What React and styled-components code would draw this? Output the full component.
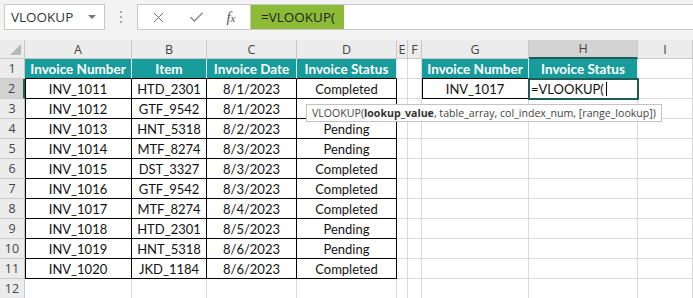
import React from 'react'
import styled, { createGlobalStyle, css } from 'styled-components'
import { X, Check } from 'lucide-react'

const GlobalStyle = createGlobalStyle`
  html, body { margin: 0; padding: 0; background: #fff; }
  * { box-sizing: border-box; }
`

const TEAL = '#189b9b'
const SEL = '#1d5e58'

const columns = [
  { id: 'A', w: '107px' },
  { id: 'B', w: '75px' },
  { id: 'C', w: '90px' },
  { id: 'D', w: '100px' },
  { id: 'E', w: '11px' },
  { id: 'F', w: '14px' },
  { id: 'G', w: '107px' },
  { id: 'H', w: '109px' },
  { id: 'I', w: '1fr' },
]

const invoices = [
  ['INV_1011', 'HTD_2301', '8/1/2023', 'Completed'],
  ['INV_1012', 'GTF_9542', '8/1/2023', 'Completed'],
  ['INV_1013', 'HNT_5318', '8/2/2023', 'Pending'],
  ['INV_1014', 'MTF_8274', '8/3/2023', 'Pending'],
  ['INV_1015', 'DST_3327', '8/3/2023', 'Completed'],
  ['INV_1016', 'GTF_9542', '8/3/2023', 'Completed'],
  ['INV_1017', 'MTF_8274', '8/4/2023', 'Completed'],
  ['INV_1018', 'HTD_2301', '8/5/2023', 'Pending'],
  ['INV_1019', 'HNT_5318', '8/6/2023', 'Pending'],
  ['INV_1020', 'JKD_1184', '8/6/2023', 'Completed'],
]

const Window = styled.div`
  width: 693px;
  height: 298px;
  overflow: hidden;
  background: #f3f3f3;
  display: flex;
  flex-direction: column;
  font-family: 'Open Sans', 'Noto Sans', sans-serif;
`

const FormulaBar = styled.div`
  height: 40px;
  display: flex;
  align-items: flex-start;
  padding: 4px 0 0 4px;
  flex-shrink: 0;
`

const NameBox = styled.div`
  width: 101px;
  height: 26px;
  background: #fff;
  border: 1px solid #c8c8c8;
  display: flex;
  align-items: center;
  justify-content: space-between;
  padding: 0 8px 0 6px;
  font-size: 13.5px;
  color: #333;
`

const Caret = styled.span`
  width: 0;
  height: 0;
  border-left: 4px solid transparent;
  border-right: 4px solid transparent;
  border-top: 4px solid #777;
`

const Grip = styled.div`
  width: 32px;
  height: 26px;
  display: flex;
  flex-direction: column;
  align-items: center;
  justify-content: center;
  gap: 3px;
  span {
    width: 2px;
    height: 2px;
    background: #a8a8a8;
  }
`

const ButtonGroup = styled.div`
  width: 113px;
  height: 26px;
  background: #fff;
  border: 1px solid #c8c8c8;
  border-right: none;
  display: flex;
  align-items: center;
  justify-content: space-around;
  padding: 0 4px 0 2px;
  color: #707070;
`

const Fx = styled.span`
  font-family: 'Liberation Serif', serif;
  font-style: italic;
  font-size: 15px;
  color: #555;
  sub {
    font-size: 11px;
    vertical-align: baseline;
  }
`

const FormulaInput = styled.div`
  flex: 1;
  height: 26px;
  background: #fff;
  border: 1px solid #c8c8c8;
  border-right: none;
  display: flex;
  align-items: stretch;
`

const FormulaText = styled.span`
  width: 93px;
  background: #8dbb36;
  display: flex;
  align-items: center;
  padding-left: 10px;
  font-size: 13.5px;
  color: #1e1e1e;
`

const SheetWrap = styled.div`
  position: relative;
  flex: 1;
`

const Grid = styled.div`
  display: grid;
  grid-template-columns: 25px ${columns.map((c) => c.w).join(' ')};
  grid-template-rows: 19px repeat(12, 20px);
  background: #fff;
  font-family: 'Lato', 'Open Sans', sans-serif;
`

const Corner = styled.div`
  position: relative;
  background: #ececec;
  border-right: 1px solid #c9c9c9;
  border-bottom: 1px solid #c9c9c9;
  &::after {
    content: '';
    position: absolute;
    right: 3px;
    bottom: 3px;
    width: 0;
    height: 0;
    border-left: 11px solid transparent;
    border-bottom: 11px solid #b9b9b9;
  }
`

const ColHeader = styled.div`
  background: ${(p) => (p.$active ? '#d3d3d3' : '#ececec')};
  border-right: 1px solid #c9c9c9;
  border-bottom: ${(p) => (p.$active ? `2px solid ${SEL}` : '1px solid #c9c9c9')};
  display: flex;
  align-items: center;
  justify-content: center;
  font-family: 'Open Sans', sans-serif;
  font-size: 12.5px;
  color: #444;
`

const RowHeader = styled.div`
  background: ${(p) => (p.$active ? '#d3d3d3' : '#ececec')};
  border-right: ${(p) => (p.$active ? `2px solid ${SEL}` : '1px solid #c9c9c9')};
  border-bottom: 1px solid #c9c9c9;
  display: flex;
  align-items: center;
  justify-content: center;
  font-family: 'Open Sans', sans-serif;
  font-size: 12.5px;
  color: #444;
`

const Cell = styled.div`
  position: relative;
  border-right: 1px solid #dadada;
  border-bottom: 1px solid #dadada;
  display: flex;
  align-items: center;
  justify-content: center;
  font-size: 13px;
  color: #111;
  white-space: nowrap;
  overflow: visible;

  ${(p) =>
    p.$head &&
    css`
      background: ${TEAL};
      color: #fff;
      font-weight: 700;
      font-size: 13.5px;
      border-right-color: #d8eeee;
      border-bottom-color: #000;
    `}

  ${(p) =>
    p.$boxed &&
    css`
      border-right-color: #000;
      border-bottom-color: #000;
    `}

  ${(p) =>
    p.$edge &&
    css`
      box-shadow: inset 1px 0 0 #000;
    `}

  ${(p) =>
    p.$active &&
    css`
      justify-content: flex-start;
      padding-left: 2px;
      outline: 2px solid ${SEL};
      outline-offset: -1px;
      z-index: 1;
    `}
`

const Cursor = styled.span`
  display: inline-block;
  width: 1px;
  height: 14px;
  background: #000;
  margin-left: 2px;
`

const Tooltip = styled.div`
  position: absolute;
  left: 306px;
  top: 64px;
  height: 18px;
  padding: 0 5px;
  background: #fff;
  border: 1px solid #c3c3c3;
  display: flex;
  align-items: center;
  font-family: 'Open Sans', sans-serif;
  font-size: 10.6px;
  color: #444;
  white-space: nowrap;
  z-index: 2;
  b {
    font-weight: 700;
    color: #333;
  }
`

function cellFor(r, col) {
  const i = columns.findIndex((c) => c.id === col)
  if (r === 1) {
    if (col === 'A') return { text: 'Invoice Number', head: true }
    if (col === 'B') return { text: 'Item', head: true }
    if (col === 'C') return { text: 'Invoice Date', head: true }
    if (col === 'D') return { text: 'Invoice Status', head: true }
    if (col === 'G') return { text: 'Invoice Number', head: true }
    if (col === 'H') return { text: 'Invoice Status', head: true }
  }
  if (r >= 2 && r <= 11 && i <= 3) {
    return { text: invoices[r - 2][i], boxed: true, edge: col === 'A' }
  }
  if (r === 2 && col === 'G') return { text: 'INV_1017', boxed: true, edge: true }
  if (r === 2 && col === 'H') return { text: '=VLOOKUP(', active: true }
  return { text: '' }
}

const App = () => {
  const rows = Array.from({ length: 12 }, (_, k) => k + 1)
  return (
    <Window>
      <GlobalStyle />
      <FormulaBar>
        <NameBox>
          VLOOKUP
          <Caret />
        </NameBox>
        <Grip>
          <span />
          <span />
          <span />
        </Grip>
        <ButtonGroup>
          <X size={17} strokeWidth={1.4} />
          <Check size={17} strokeWidth={2} color="#8a8a8a" />
          <Fx>
            f<sub>x</sub>
          </Fx>
        </ButtonGroup>
        <FormulaInput>
          <FormulaText>=VLOOKUP(</FormulaText>
        </FormulaInput>
      </FormulaBar>

      <SheetWrap>
        <Grid>
          <Corner />
          {columns.map((c) => (
            <ColHeader key={c.id} $active={c.id === 'H'}>
              {c.id}
            </ColHeader>
          ))}
          {rows.map((r) => (
            <React.Fragment key={r}>
              <RowHeader $active={r === 2}>{r}</RowHeader>
              {columns.map((c) => {
                const cell = cellFor(r, c.id)
                return (
                  <Cell
                    key={c.id}
                    $head={cell.head}
                    $boxed={cell.boxed}
                    $edge={cell.edge}
                    $active={cell.active}
                  >
                    {cell.text}
                    {cell.active && <Cursor />}
                  </Cell>
                )
              })}
            </React.Fragment>
          ))}
        </Grid>
        <Tooltip>
          VLOOKUP(<b>lookup_value</b>, table_array, col_index_num, [range_lookup])
        </Tooltip>
      </SheetWrap>
    </Window>
  )
}

export default App
